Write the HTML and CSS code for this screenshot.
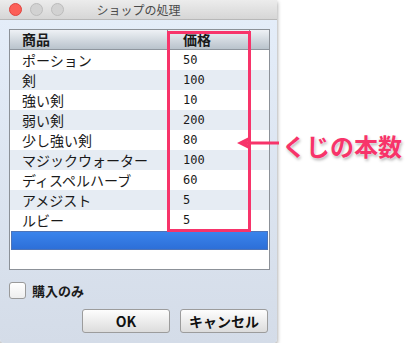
FILE: index.html
```html
<!DOCTYPE html>
<html lang="ja">
<head>
  <meta charset="UTF-8" />
  <title>ショップの処理</title>
  <link rel="stylesheet" href="styles.css">
</head>
<body>
  <div class="window">
    <div class="titlebar">
      <span class="light red"></span>
      <span class="light"></span>
      <span class="light"></span>
      <span class="title">ショップの処理</span>
    </div>
    <div class="content">
      <div class="table">
        <div class="row head">
          <div class="cell name">商品</div>
          <div class="cell price">価格</div>
          <div class="cell rest"></div>
        </div>
        <div class="row"><div class="cell name">ポーション</div><div class="cell price">50</div></div>
        <div class="row alt"><div class="cell name">剣</div><div class="cell price">100</div></div>
        <div class="row"><div class="cell name">強い剣</div><div class="cell price">10</div></div>
        <div class="row alt"><div class="cell name">弱い剣</div><div class="cell price">200</div></div>
        <div class="row"><div class="cell name">少し強い剣</div><div class="cell price">80</div></div>
        <div class="row alt"><div class="cell name">マジックウォーター</div><div class="cell price">100</div></div>
        <div class="row"><div class="cell name">ディスペルハーブ</div><div class="cell price">60</div></div>
        <div class="row alt"><div class="cell name">アメジスト</div><div class="cell price">5</div></div>
        <div class="row"><div class="cell name">ルビー</div><div class="cell price">5</div></div>
        <div class="row selected"></div>
      </div>
      <label class="check">
        <span class="box"></span>
        <span>購入のみ</span>
      </label>
      <div class="buttons">
        <button class="btn">OK</button>
        <button class="btn">キャンセル</button>
      </div>
    </div>
  </div>

  <!-- annotation drawn over the screenshot -->
  <div class="mark"></div>
  <svg class="arrow" width="46" height="20" viewBox="0 0 46 20">
    <line x1="44" y1="10" x2="10" y2="10" stroke="#f7346a" stroke-width="3" />
    <polygon points="2,10 16,3 12,10 16,17" fill="#f7346a" />
  </svg>
  <div class="note">くじの本数</div>
</body>
</html>
```

FILE: styles.css
```css
body {
  margin: 0;
  background: #ffffff;
  font-family: "Noto Sans CJK JP", "Noto Sans", sans-serif;
  color: #1a1a1a;
}
.window {
  width: 277px;
  height: 343px;
  display: flex;
  flex-direction: column;
  background: linear-gradient(#e5eefa, #d4dce8);
  box-shadow: 0 2px 4px rgba(0, 0, 0, 0.45);
  border-radius: 0 0 4px 4px;
}
.titlebar {
  height: 20px;
  flex: none;
  display: flex;
  align-items: center;
  gap: 8px;
  padding-left: 9px;
  position: relative;
  background: linear-gradient(#ececec, #d6d6d6);
  border-bottom: 1px solid #b8b8b8;
  box-sizing: border-box;
}
.light {
  width: 11px;
  height: 11px;
  border-radius: 50%;
  background: #d2d2d2;
  border: 0.5px solid #bcbcbc;
}
.light.red {
  background: #fc5f57;
  border-color: #e0443e;
}
.title {
  position: absolute;
  left: 0;
  right: 0;
  text-align: center;
  font-size: 12px;
  color: #4a4a4a;
  line-height: 20px;
}
.content {
  padding: 9px 7px 0 9px;
  display: flex;
  flex-direction: column;
}
.table {
  width: 261px;
  height: 241px;
  box-sizing: border-box;
  border: 1px solid #8c9198;
  background: #ffffff;
}
.row {
  height: 20px;
  display: flex;
  font-size: 14px;
  line-height: 20px;
}
.row.alt {
  background: #e6ecf3;
}
.row.head {
  height: 19px;
  line-height: 19px;
  font-weight: bold;
  background: linear-gradient(#eef1f5, #b9c3cc);
  border-bottom: 1px solid #8f969e;
}
.cell.name {
  width: 158px;
  padding-left: 12px;
  box-sizing: border-box;
}
.cell.price {
  width: 82px;
  padding-left: 15px;
  box-sizing: border-box;
  font-family: "DejaVu Sans Mono", monospace;
  font-size: 12px;
}
.head .cell {
  border-right: 1px solid #8b9199;
}
.head .cell.price {
  font-family: "Noto Sans CJK JP", sans-serif;
  font-size: 14px;
}
.head .cell.rest {
  flex: 1;
  border-right: none;
}
.row.selected {
  margin: 1px 1px 0 1px;
  height: 19px;
  box-sizing: border-box;
  border: 1px solid #4d74b8;
  background: linear-gradient(#3a84ec, #2d6fd8);
}
.check {
  margin-top: 12px;
  display: flex;
  align-items: center;
  gap: 6px;
  font-size: 13px;
  font-weight: bold;
  height: 16px;
}
.box {
  width: 15px;
  height: 15px;
  border: 1px solid #9a9a9a;
  border-radius: 3px;
  background: linear-gradient(#ffffff, #eeeeee);
}
.buttons {
  margin-top: 11px;
  display: flex;
  justify-content: flex-end;
  gap: 10px;
  padding-right: 2px;
}
.btn {
  width: 88px;
  height: 24px;
  border: 1px solid #9c9c9c;
  border-radius: 3px;
  background: linear-gradient(#fdfdfd, #dcdcdc);
  font-family: "Noto Sans CJK JP", sans-serif;
  font-size: 14px;
  font-weight: bold;
  color: #111;
  padding: 0;
}
.mark {
  position: absolute;
  left: 167px;
  top: 31px;
  width: 84px;
  height: 201px;
  box-sizing: border-box;
  border: 3px solid #f7346a;
}
.arrow {
  position: absolute;
  left: 235px;
  top: 133px;
}
.note {
  position: absolute;
  left: 282px;
  top: 128px;
  font-size: 24px;
  font-weight: bold;
  color: #f7346a;
  text-shadow: 0 0 2px #fff, 1px 2px 3px rgba(0, 0, 0, 0.3);
}
```
